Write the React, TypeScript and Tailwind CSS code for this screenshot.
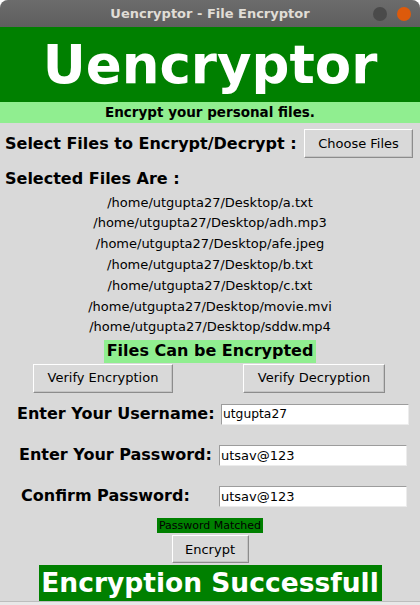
import React from "react";

const files = [
  "/home/utgupta27/Desktop/a.txt",
  "/home/utgupta27/Desktop/adh.mp3",
  "/home/utgupta27/Desktop/afe.jpeg",
  "/home/utgupta27/Desktop/b.txt",
  "/home/utgupta27/Desktop/c.txt",
  "/home/utgupta27/Desktop/movie.mvi",
  "/home/utgupta27/Desktop/sddw.mp4",
];

function TkButton({ children, className = "" }: { children: React.ReactNode; className?: string }) {
  return (
    <div
      className={
        "flex items-center justify-center bg-[#d9d9d9] text-[13px] text-black border border-t-white border-l-white border-r-[#8c8c8c] border-b-[#8c8c8c] shadow-[inset_-1px_-1px_0_#c4c4c4] " +
        className
      }
    >
      {children}
    </div>
  );
}

function Entry({ value, className = "", textClass = "text-[13px]" }: { value: string; className?: string; textClass?: string }) {
  return (
    <div
      className={
        "h-[21px] bg-white flex items-center pl-[1px] border border-t-[#9c9c9c] border-l-[#9c9c9c] border-r-[#ececec] border-b-[#ececec] " +
        className
      }
    >
      <span className={textClass + " text-black leading-none"}>{value}</span>
    </div>
  );
}

export default function App() {
  return (
    <div
      className="w-[420px] h-[605px] overflow-hidden bg-white"
      style={{ fontFamily: '"DejaVu Sans", sans-serif' }}
    >
      <div className="w-[420px] h-[605px] flex flex-col bg-[#d9d9d9] rounded-t-[8px] overflow-hidden">
        {/* Title bar */}
        <div className="relative h-[27px] shrink-0 bg-gradient-to-b from-[#6c6c6c] to-[#5e5e5e] flex items-center justify-center">
          <span className="text-[13px] font-bold text-[#e0ddd6] leading-none">Uencryptor - File Encryptor</span>
          <div className="absolute right-[9px] top-[7px] flex gap-[10px]">
            <div className="w-[14px] h-[14px] rounded-full bg-[#4a4a4a]" />
            <div className="w-[14px] h-[14px] rounded-full bg-[#dd5a0b]" />
          </div>
        </div>

        {/* Banner */}
        <div className="h-[75px] shrink-0 bg-[#008000] flex items-center justify-center">
          <span className="text-[53px] font-bold text-white leading-none">Uencryptor</span>
        </div>
        <div className="h-[21px] shrink-0 bg-[#90ee90] flex items-center justify-center">
          <span className="text-[13.5px] font-bold text-black leading-none">Encrypt your personal files.</span>
        </div>

        {/* Select row */}
        <div className="mt-[6px] h-[29px] flex items-center pl-[5px] pr-[7px]">
          <span className="text-[16px] font-bold text-black leading-none">Select Files to Encrypt/Decrypt :</span>
          <TkButton className="ml-auto w-[109px] h-[29px]">Choose Files</TkButton>
        </div>

        <div className="mt-[10px] h-[21px] leading-[21px] pl-[5px] text-[16px] font-bold text-black">
          Selected Files Are :
        </div>

        <div className="mt-[3.6px] flex flex-col items-center">
          {files.map((f) => (
            <div key={f} className="h-[20.8px] leading-[20.8px] text-[13px] text-black">
              {f}
            </div>
          ))}
        </div>

        <div className="mt-[1.8px] self-center h-[23px] px-[3px] bg-[#90ee90] flex items-center">
          <span className="text-[16px] font-bold text-black leading-none">Files Can be Encrypted</span>
        </div>

        <div className="mt-[1px] grid grid-cols-2 h-[29px]">
          <div className="flex justify-center pr-[4px]">
            <TkButton className="w-[140px] h-[29px]">Verify Encryption</TkButton>
          </div>
          <div className="flex justify-center">
            <TkButton className="w-[142px] h-[29px] -translate-x-[1px]">Verify Decryption</TkButton>
          </div>
        </div>

        {/* Username */}
        <div className="mt-[11px] flex items-center pl-[17px]">
          <span className="w-[204px] text-[16px] font-bold text-black leading-none">Enter Your Username:</span>
          <Entry value="utgupta27" className="w-[188px]" textClass="text-[12.3px]" />
        </div>
        <div className="mt-[20px] flex items-center pl-[19px]">
          <span className="w-[200px] text-[16px] font-bold text-black leading-none">Enter Your Password:</span>
          <Entry value="utsav@123" className="w-[188px]" />
        </div>
        <div className="mt-[20px] flex items-center pl-[21px]">
          <span className="w-[198px] text-[16px] font-bold text-black leading-none">Confirm Password:</span>
          <Entry value="utsav@123" className="w-[188px]" />
        </div>

        <div className="mt-[11px] self-center h-[16px] w-[106px] bg-[#008000] flex items-center justify-center">
          <span className="text-[11px] text-black leading-none">Password Matched</span>
        </div>

        <div className="mt-[2px] self-center">
          <TkButton className="w-[77px] h-[28px]">Encrypt</TkButton>
        </div>

        <div className="mt-[2px] self-center w-[343px] h-[36px] bg-[#008000] flex items-center justify-center">
          <span className="text-[26.5px] font-bold text-white leading-none">Encryption Successfull</span>
        </div>

        <div className="mt-auto h-[1px] bg-[#bdbdbd]" />
        <div className="h-[3px] bg-[#e8e8e8]" />
      </div>
    </div>
  );
}
